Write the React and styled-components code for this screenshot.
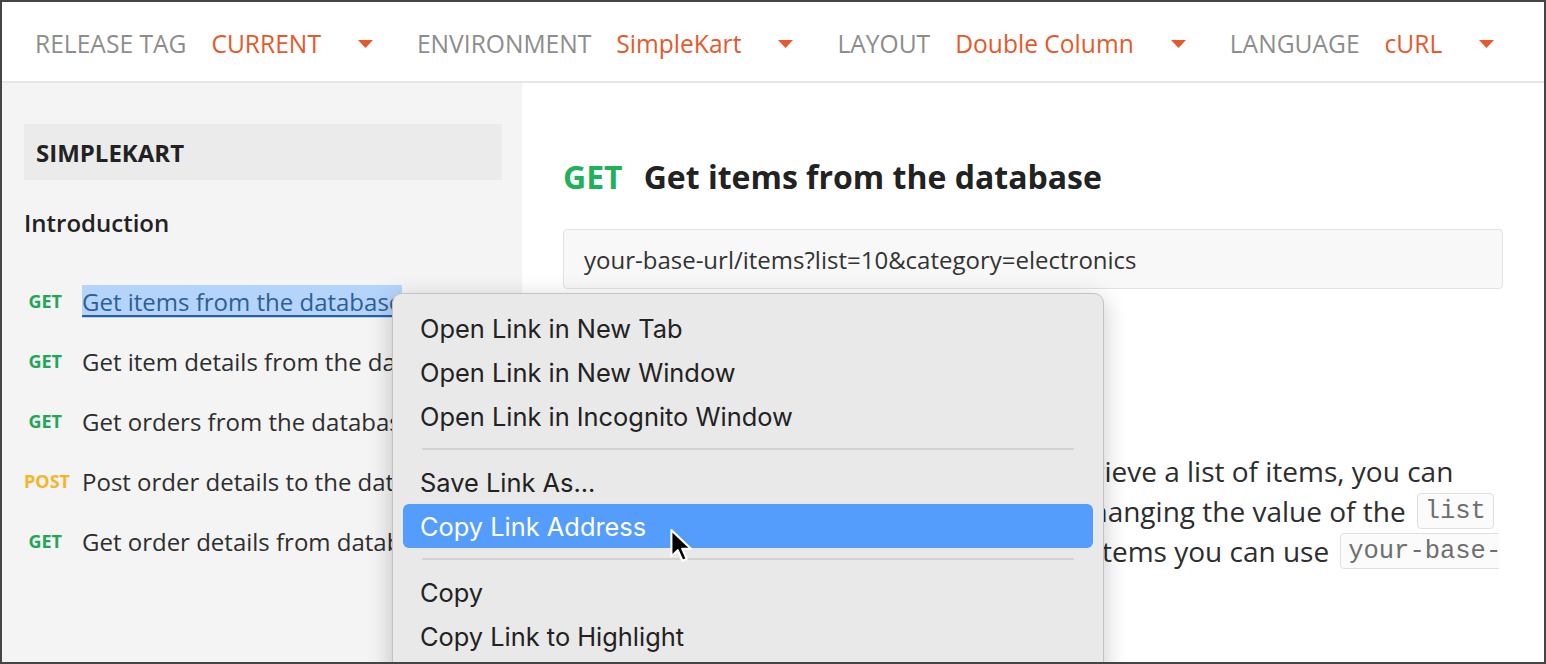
import React from 'react';
import styled, { createGlobalStyle } from 'styled-components';

const GlobalStyle = createGlobalStyle`
  body {
    margin: 0;
    font-family: 'Open Sans', 'Liberation Sans', sans-serif;
    background: #444;
  }
`;

const Frame = styled.div`
  position: relative;
  width: 1546px;
  height: 664px;
  box-sizing: border-box;
  border: 2px solid #454545;
  overflow: hidden;
  display: flex;
  flex-direction: column;
  background: #fff;
`;

const TopBar = styled.header`
  height: 81px;
  box-sizing: border-box;
  flex-shrink: 0;
  display: flex;
  align-items: center;
  padding: 4px 0 0 33px;
  background: #fff;
  border-bottom: 2px solid #e7e7e7;
  font-size: 24.6px;
  white-space: nowrap;
`;

const Selector = styled.div`
  display: flex;
  align-items: center;
  margin-right: 44px;
`;

const SelectorLabel = styled.span`
  color: #8d8d8d;
  margin-right: 25px;
`;

const SelectorValue = styled.span`
  color: #e5592b;
  margin-right: 37px;
`;

const Caret = () => (
  <svg width="15" height="8" viewBox="0 0 15 8">
    <path d="M0 0 H15 L7.5 8 Z" fill="#e5592b" />
  </svg>
);

const Body = styled.div`
  flex: 1;
  display: flex;
  min-height: 0;
`;

const Sidebar = styled.nav`
  width: 520px;
  flex-shrink: 0;
  box-sizing: border-box;
  padding: 41px 20px 0 22px;
  background: #f4f4f4;
  overflow: hidden;
`;

const CollectionTitle = styled.div`
  height: 56px;
  display: flex;
  align-items: center;
  padding-left: 12px;
  background: #ebebeb;
  font-size: 24px;
  font-weight: 700;
  color: #222;
`;

const SectionTitle = styled.div`
  margin-top: 27px;
  line-height: 32px;
  font-size: 24px;
  font-weight: 600;
  color: #222;
`;

const EndpointList = styled.ul`
  list-style: none;
  margin: 32px 0 0;
  padding: 0;
`;

const EndpointRow = styled.li`
  height: 60px;
  display: flex;
  align-items: center;
  white-space: nowrap;
`;

const Method = styled.span`
  width: 38px;
  flex-shrink: 0;
  text-align: right;
  margin-right: 20px;
  font-size: 18px;
  font-weight: 700;
  color: ${p => (p.$kind === 'POST' ? '#f4b42c' : '#22a559')};
`;

const EndpointName = styled.span`
  font-size: 24px;
  line-height: 33px;
  color: ${p => (p.$selected ? '#2d5f94' : '#2e2e2e')};
  background: ${p => (p.$selected ? '#b4d4fb' : 'transparent')};
  text-decoration: ${p => (p.$selected ? 'underline' : 'none')};
  text-underline-offset: 4px;
  text-decoration-thickness: 2px;
`;

const Main = styled.main`
  flex: 1;
  min-width: 0;
  padding: 73px 41px 0 41px;
  background: #fff;
  overflow: hidden;
`;

const RequestHeading = styled.h1`
  margin: 0;
  display: flex;
  align-items: center;
  line-height: 42px;
  font-size: 32px;
  font-weight: 700;
  color: #222;
  white-space: nowrap;
`;

const HeadingMethod = styled.span`
  color: #1fb25a;
  margin-right: 21px;
`;

const UrlBox = styled.div`
  margin-top: 31px;
  height: 60px;
  box-sizing: border-box;
  display: flex;
  align-items: center;
  padding: 0 20px;
  background: #f8f8f8;
  border: 1px solid #e2e2e2;
  border-radius: 4px;
  font-size: 24px;
  color: #333;
`;

const Description = styled.div`
  margin-top: 162px;
  margin-right: 4px;
  font-size: 28px;
  color: #2d2d2d;
  overflow: hidden;
`;

const DescLine = styled.div`
  height: 40px;
  display: flex;
  align-items: center;
  white-space: nowrap;
`;

const Code = styled.code`
  display: inline-flex;
  align-items: center;
  height: 36px;
  box-sizing: border-box;
  margin-left: 11px;
  padding: 0 7px;
  border: 1px solid #e0e0e0;
  border-radius: 4px;
  background: #fbfbfb;
  font-family: 'Liberation Mono', 'DejaVu Sans Mono', monospace;
  font-size: 25.5px;
  color: #6f6f6f;
`;

const ContextMenu = styled.div`
  position: absolute;
  left: 390px;
  top: 291px;
  width: 712px;
  height: 400px;
  box-sizing: border-box;
  padding-top: 12px;
  background: #e9e9e9;
  border: 1px solid #c4c4c4;
  border-radius: 10px;
  box-shadow: 0 6px 24px rgba(0, 0, 0, 0.22);
  font-family: Inter, 'Liberation Sans', sans-serif;
  font-size: 25.4px;
  color: #222;
`;

const MenuItem = styled.div`
  height: 44px;
  display: flex;
  align-items: center;
  margin: 0 10px;
  padding-left: 17px;
  border-radius: 6px;
  background: ${p => (p.$active ? '#559dfc' : 'transparent')};
  color: ${p => (p.$active ? '#fff' : '#222')};
`;

const MenuSeparator = styled.div`
  height: 2px;
  margin: 10px 29px;
  background: #d2d2d2;
`;

const Pointer = styled.svg`
  position: absolute;
  left: 667px;
  top: 526px;
`;

const selectors = [
  { label: 'RELEASE TAG', value: 'CURRENT' },
  { label: 'ENVIRONMENT', value: 'SimpleKart' },
  { label: 'LAYOUT', value: 'Double Column' },
  { label: 'LANGUAGE', value: 'cURL' },
];

const endpoints = [
  { method: 'GET', name: 'Get items from the database', selected: true },
  { method: 'GET', name: 'Get item details from the database' },
  { method: 'GET', name: 'Get orders from the database' },
  { method: 'POST', name: 'Post order details to the database' },
  { method: 'GET', name: 'Get order details from database' },
];

const menuGroups = [
  ['Open Link in New Tab', 'Open Link in New Window', 'Open Link in Incognito Window'],
  ['Save Link As...', 'Copy Link Address'],
  ['Copy', 'Copy Link to Highlight'],
];

export default function App() {
  return (
    <>
      <GlobalStyle />
      <Frame>
        <TopBar>
          {selectors.map(s => (
            <Selector key={s.label}>
              <SelectorLabel>{s.label}</SelectorLabel>
              <SelectorValue>{s.value}</SelectorValue>
              <Caret />
            </Selector>
          ))}
        </TopBar>
        <Body>
          <Sidebar>
            <CollectionTitle>SIMPLEKART</CollectionTitle>
            <SectionTitle>Introduction</SectionTitle>
            <EndpointList>
              {endpoints.map(e => (
                <EndpointRow key={e.name}>
                  <Method $kind={e.method}>{e.method}</Method>
                  <EndpointName $selected={e.selected}>{e.name}</EndpointName>
                </EndpointRow>
              ))}
            </EndpointList>
          </Sidebar>
          <Main>
            <RequestHeading>
              <HeadingMethod>GET</HeadingMethod>
              Get items from the database
            </RequestHeading>
            <UrlBox>your-base-url/items?list=10&amp;category=electronics</UrlBox>
            <Description>
              <DescLine>All query parameters are optional. To retrieve a list of items, you can</DescLine>
              <DescLine>
                trim the number of results returned by changing the value of the
                <Code>list</Code>
              </DescLine>
              <DescLine>
                parameter. For instance to fetch just ten items you can use
                <Code>your-base-url/items?list=10</Code>
              </DescLine>
            </Description>
          </Main>
        </Body>
        <ContextMenu>
          {menuGroups.map((group, gi) => (
            <React.Fragment key={gi}>
              {gi > 0 && <MenuSeparator />}
              {group.map(item => (
                <MenuItem key={item} $active={item === 'Copy Link Address'}>
                  {item}
                </MenuItem>
              ))}
            </React.Fragment>
          ))}
        </ContextMenu>
        <Pointer width="28" height="38" viewBox="0 0 26 36">
          <path
            d="M2 2 L2 27 L8 21 L12.5 31 L16.5 29.3 L12.2 19.6 L20.5 19.6 Z"
            fill="#000"
            stroke="#fff"
            strokeWidth="2"
            strokeLinejoin="round"
          />
        </Pointer>
      </Frame>
    </>
  );
}
